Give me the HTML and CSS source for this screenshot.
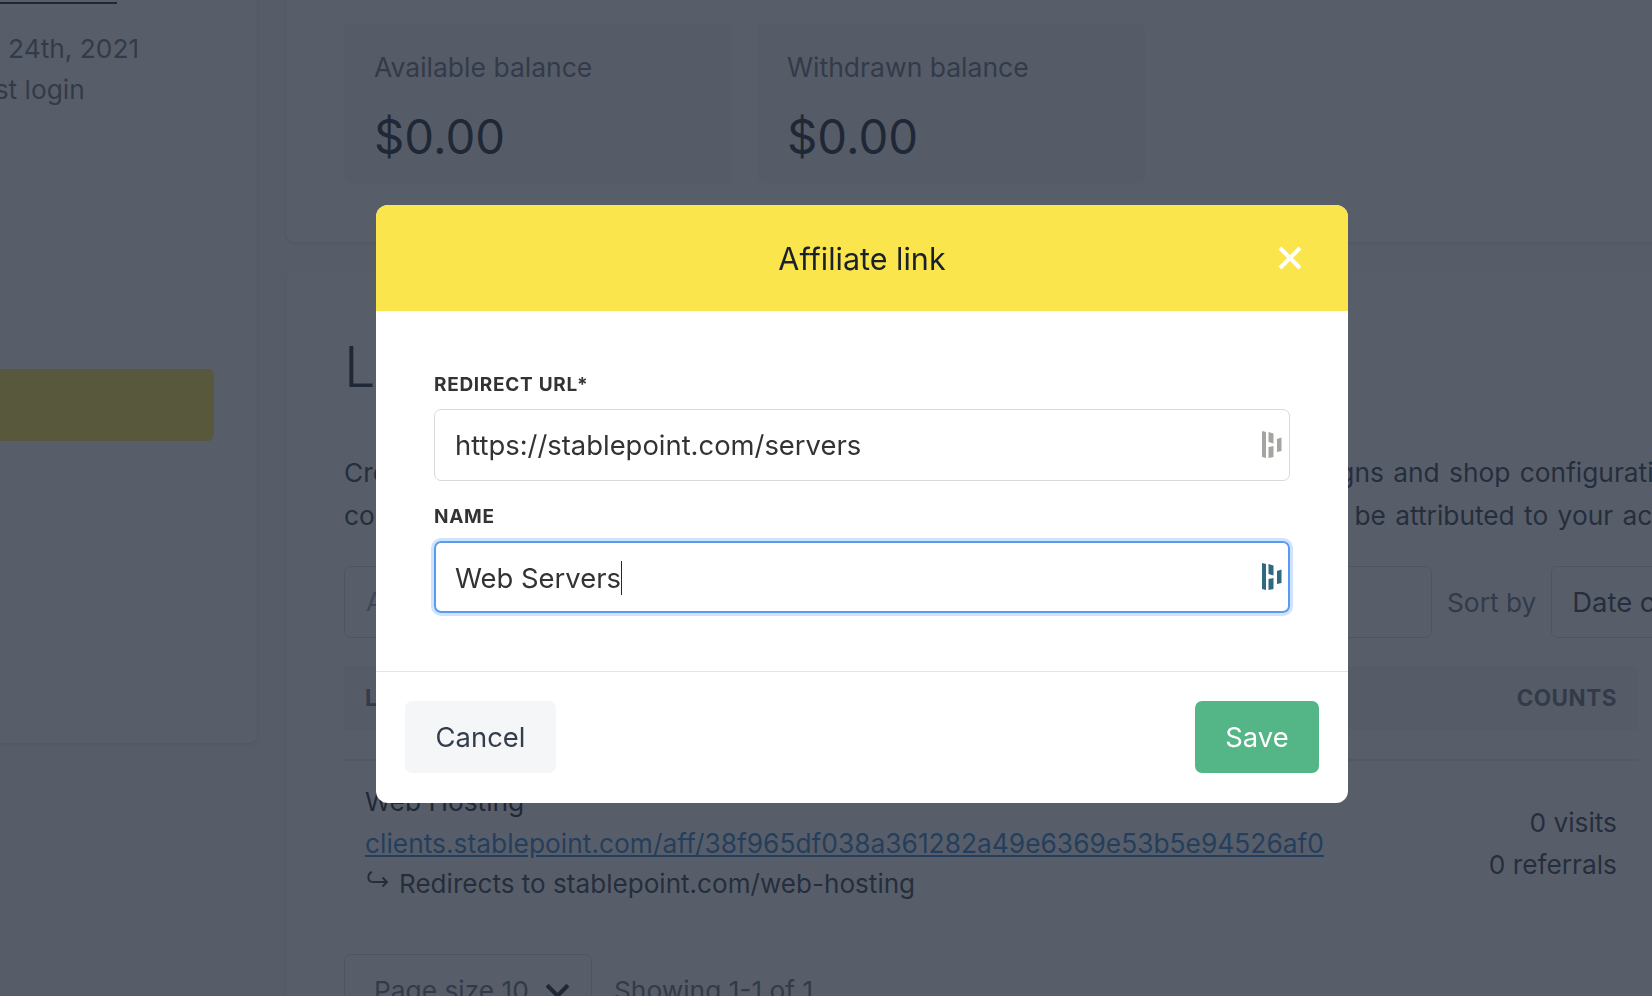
FILE: index.html
```html
<!DOCTYPE html>
<html>
<head>
  <title>Affiliate link</title>
  <link rel="stylesheet" href="styles.css">
</head>
<body>
  <div class="page">
    <aside class="sidebar">
      <a class="side-email" href="#">info@stablepoint.com</a>
      <p class="side-line">Joined: March 24th, 2021</p>
      <p class="side-line">Active from last login</p>
      <div class="side-button"></div>
    </aside>

    <main class="main">
      <section class="card card-balance">
        <div class="stat">
          <div class="stat-label">Available balance</div>
          <div class="stat-value">$0.00</div>
        </div>
        <div class="stat">
          <div class="stat-label">Withdrawn balance</div>
          <div class="stat-value">$0.00</div>
        </div>
      </section>

      <section class="card card-links">
        <h2 class="links-title">Links</h2>
        <p class="links-intro">Create affiliate links that point to any page, product, pricing, marketing campaigns and shop configurations.<br>
          conversions that are made through any of these links will always and only ever be attributed to your account.</p>

        <div class="filters">
          <div class="filter-search">A</div>
          <span class="filter-label">Sort by</span>
          <div class="filter-select">Date created</div>
        </div>

        <div class="table-head">
          <span>LINK</span>
          <span>COUNTS</span>
        </div>
        <div class="table-row">
          <div>
            <div class="row-name">Web Hosting</div>
            <a class="row-link" href="#">clients.stablepoint.com/aff/38f965df038a361282a49e6369e53b5e94526af0</a>
            <div class="row-redirect">
              <svg class="redirect-icon" viewBox="0 0 22 17" fill="none" stroke="currentColor" stroke-width="2">
                <path d="M5 1C0 3 0 11 6 11H20"/>
                <path d="M15.500 6.500L20 11L15.500 15.500"/>
              </svg>
              Redirects to stablepoint.com/web-hosting
            </div>
          </div>
          <div class="row-counts">
            <div>0 visits</div>
            <div>0 referrals</div>
          </div>
        </div>

        <div class="pager">
          <div class="pager-size">Page size 10
            <svg class="pager-chevron" viewBox="0 0 24 14" fill="none" stroke="currentColor" stroke-width="4">
              <path d="M2 2L12 12L22 2"/>
            </svg>
          </div>
          <span class="pager-info">Showing 1-1 of 1</span>
        </div>
      </section>
    </main>
  </div>

  <div class="overlay"></div>

  <div class="modal">
    <div class="modal-header">
      <h3 class="modal-title">Affiliate link</h3>
      <svg class="modal-close" viewBox="0 0 24 24" stroke="#fff" stroke-width="4">
        <path d="M2 2L22 22M22 2L2 22"/>
      </svg>
    </div>

    <div class="modal-body">
      <label class="field-label">REDIRECT URL*</label>
      <div class="field">
        <span>https://stablepoint.com/servers</span>
        <svg class="field-icon" viewBox="0 0 20 27" fill="#a5a4a0">
          <path d="M0 0L4 1V27L0 26Z"/>
          <path d="M6.500 1L11.500 2.500V12.500L6.500 11Z"/>
          <path d="M6.500 16L11.500 15V26L6.500 27Z"/>
          <path d="M15 8L19.500 6.500V20L15 21Z"/>
        </svg>
      </div>

      <label class="field-label">NAME</label>
      <div class="field field-focus">
        <span>Web Servers</span><span class="caret"></span>
        <svg class="field-icon" viewBox="0 0 20 27" fill="#2f6a7f">
          <path d="M0 0L4 1V27L0 26Z"/>
          <path d="M6.500 1L11.500 2.500V12.500L6.500 11Z"/>
          <path d="M6.500 16L11.500 15V26L6.500 27Z"/>
          <path d="M15 8L19.500 6.500V20L15 21Z"/>
        </svg>
      </div>
    </div>

    <div class="modal-footer">
      <button class="btn btn-cancel">Cancel</button>
      <button class="btn btn-save">Save</button>
    </div>
  </div>
</body>
</html>
```

FILE: styles.css
```css
* {
  box-sizing: border-box;
}

html,
body {
  height: 100%;
  margin: 0;
  overflow: hidden;
}

body {
  font-family: Inter, "Noto Sans", sans-serif;
  font-size: 26.3px;
  background-color: #f6f7f9;
  color: #374151;
}

.page {
  display: flex;
  gap: 29px;
  width: 1800px;
  margin-top: -36px;
  margin-left: -200px;
}

/* sidebar, scrolled partly off the left edge */
.sidebar {
  width: 457px;
  height: 779px;
  padding-left: 23px;
  padding-right: 43px;
  padding-top: 10px;
  background-color: #fff;
  border-radius: 8px;
  box-shadow: 0 1px 3px rgba(0, 0, 0, 0.12);
  flex-shrink: 0;
}

.side-email {
  display: block;
  padding-right: 97px;
  line-height: 34px;
  text-align: right;
  color: #1f2937;
  white-space: nowrap;
}

.side-email + .side-line {
  margin-top: 20px;
}

.side-line {
  margin: 0;
  line-height: 41px;
  color: #6b7280;
  white-space: nowrap;
}

.side-button {
  height: 72px;
  margin-top: 259px;
  margin-left: -23px;
  background-color: #fbe54d;
  border-radius: 6px;
}

.main {
  width: 1410px;
  flex-shrink: 0;
}

.card {
  padding: 59px 59px 59px 58px;
  background-color: #fff;
  border-radius: 8px;
  box-shadow: 0 1px 3px rgba(0, 0, 0, 0.12);
}

.card-balance {
  display: flex;
  gap: 25px;
  margin-bottom: 29px;
}

.stat {
  width: 388px;
  height: 160px;
  padding: 27px 30px;
  background-color: #f4f5f7;
  border-radius: 6px;
}

.stat-label {
  font-size: 26.5px;
  line-height: 34px;
  color: #6b7280;
}

.stat-value {
  margin-top: 21px;
  font-size: 47.3px;
  line-height: 64px;
  color: #1f2937;
}

.links-title {
  margin: 0;
  font-size: 56px;
  font-weight: 300;
  line-height: 74px;
  color: #1f2937;
}

.links-intro {
  margin: 47px 0 0;
  line-height: 43px;
  word-spacing: 2px;
  white-space: nowrap;
  color: #374151;
}

.filters {
  display: flex;
  align-items: center;
  gap: 15px;
  margin-top: 29px;
}

.filter-search {
  width: 1088px;
  height: 72px;
  padding: 0 21px;
  line-height: 70px;
  color: #9ca3af;
  border: 1px solid #d8dce2;
  border-radius: 6px;
  flex-shrink: 0;
}

.filter-label {
  color: #6b7280;
  white-space: nowrap;
}

.filter-select {
  width: 280px;
  height: 72px;
  padding: 0 20px;
  font-size: 27.4px;
  line-height: 70px;
  border: 1px solid #d8dce2;
  border-radius: 6px;
  white-space: nowrap;
  flex-shrink: 0;
}

.table-head {
  display: flex;
  justify-content: space-between;
  height: 64px;
  margin-top: 28px;
  padding: 0 20px 0 21px;
  font-size: 22.5px;
  font-weight: 700;
  line-height: 64px;
  letter-spacing: 0.5px;
  color: #6b7280;
  background-color: #f4f5f7;
}

.table-row {
  display: flex;
  justify-content: space-between;
  padding: 19px 20px 0 21px;
  border-top: 2px solid #e5e7eb;
  margin-top: 29px;
}

.row-name {
  line-height: 43px;
  color: #1f2937;
}

.row-link {
  display: block;
  font-size: 26.35px;
  line-height: 40px;
  color: #3182ce;
}

.row-redirect {
  display: flex;
  align-items: center;
  gap: 10px;
  font-size: 26.1px;
  line-height: 41px;
}

.redirect-icon {
  width: 22px;
  height: 17px;
  margin-top: -8px;
  margin-left: 2px;
}

.row-counts {
  margin-top: 22px;
  line-height: 42px;
  text-align: right;
}

.pager {
  display: flex;
  align-items: center;
  gap: 22px;
  margin-top: 50px;
}

.pager-size {
  display: flex;
  align-items: center;
  gap: 16px;
  width: 248px;
  height: 72px;
  padding: 0 29px;
  color: #6b7280;
  border: 1px solid #d8dce2;
  border-radius: 6px;
  white-space: nowrap;
}

.pager-chevron {
  width: 25px;
  height: 15px;
  color: #1f2937;
  flex-shrink: 0;
}

.pager-info {
  color: #6b7280;
}

/* modal */
.overlay {
  position: fixed;
  inset: 0;
  background-color: #202837;
  opacity: 0.75;
}

.modal {
  position: fixed;
  top: 205px;
  left: 376px;
  width: 972px;
  background-color: #fff;
  border-radius: 12px;
  overflow: hidden;
}

.modal-header {
  position: relative;
  height: 106px;
  background-color: #fbe54d;
}

.modal-title {
  margin: 0;
  font-size: 30.5px;
  font-weight: 400;
  line-height: 108px;
  text-align: center;
  color: #1a202c;
}

.modal-close {
  position: absolute;
  top: 41px;
  right: 46px;
  width: 24px;
  height: 24px;
}

.modal-body {
  height: 361px;
  padding: 61px 58px 0;
  border-bottom: 1px solid #e2e4e8;
}

.field-label {
  display: block;
  font-size: 19px;
  font-weight: 700;
  line-height: 26px;
  letter-spacing: 0.7px;
  color: #333;
}

.field {
  display: flex;
  align-items: center;
  position: relative;
  width: 856px;
  height: 72px;
  margin: 11px 0 23px;
  padding: 0 20px;
  font-size: 27.4px;
  color: #333;
  border: 1px solid #d8d9dc;
  border-radius: 7px;
}

.field-focus {
  padding-top: 2px;
  padding-left: 19px;
  border: 2px solid #5a9bef;
  box-shadow: 0 0 0 3px #d0e3fc;
}

.caret {
  width: 1.5px;
  height: 34px;
  background-color: #1f2937;
}

.field-icon {
  position: absolute;
  top: 21px;
  right: 7px;
  width: 20px;
  height: 27px;
}

.field-focus .field-icon {
  top: 20px;
  right: 6px;
}

.modal-footer {
  display: flex;
  justify-content: space-between;
  padding: 29px 29px 30px;
}

.btn {
  height: 72px;
  font-family: inherit;
  font-size: 27.4px;
  border: none;
  border-radius: 7px;
}

.btn-cancel {
  width: 151px;
  color: #333d4b;
  background-color: #f5f6f8;
}

.btn-save {
  width: 124px;
  color: #fff;
  background-color: #54b586;
}
```
